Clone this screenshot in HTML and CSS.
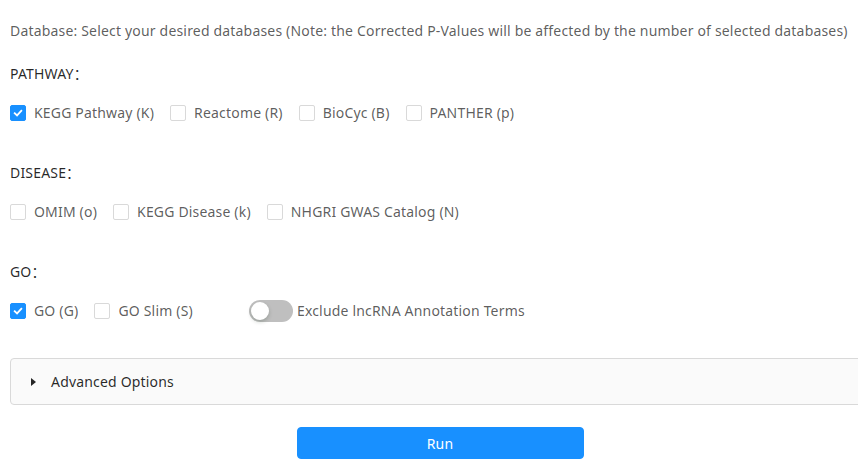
FILE: index.html
```html
<!DOCTYPE html>
<html>
<head>
<meta charset="utf-8">
<link rel="stylesheet" href="styles.css">
</head>
<body>
<div class="page">
  <p class="intro">Database: Select your desired databases (Note: the Corrected P-Values will be affected by the number of selected databases)</p>

  <div class="group">
    <div class="group-label">PATHWAY：</div>
    <div class="row">
      <label class="cb checked"><span class="box"><svg viewBox="0 0 16 16"><path d="M4.2 8.2 L6.9 10.8 L11.8 5.4" /></svg></span><span class="txt">KEGG Pathway (K)</span></label>
      <label class="cb"><span class="box"></span><span class="txt">Reactome (R)</span></label>
      <label class="cb"><span class="box"></span><span class="txt">BioCyc (B)</span></label>
      <label class="cb"><span class="box"></span><span class="txt">PANTHER (p)</span></label>
    </div>
  </div>

  <div class="group">
    <div class="group-label">DISEASE：</div>
    <div class="row">
      <label class="cb"><span class="box"></span><span class="txt">OMIM (o)</span></label>
      <label class="cb"><span class="box"></span><span class="txt">KEGG Disease (k)</span></label>
      <label class="cb"><span class="box"></span><span class="txt">NHGRI GWAS Catalog (N)</span></label>
    </div>
  </div>

  <div class="group">
    <div class="group-label">GO：</div>
    <div class="row">
      <label class="cb checked"><span class="box"><svg viewBox="0 0 16 16"><path d="M4.2 8.2 L6.9 10.8 L11.8 5.4" /></svg></span><span class="txt">GO (G)</span></label>
      <label class="cb"><span class="box"></span><span class="txt">GO Slim (S)</span></label>
      <span class="switch-wrap"><span class="switch"><span class="knob"></span></span><span class="switch-txt">Exclude lncRNA Annotation Terms</span></span>
    </div>
  </div>

  <div class="collapse">
    <div class="collapse-head"><span class="arrow"></span><span>Advanced Options</span></div>
  </div>

  <div class="actions">
    <button class="run">Run</button>
  </div>
</div>
</body>
</html>
```

FILE: styles.css
```css
html, body {
  margin: 0;
  padding: 0;
  background: #fff;
  overflow: hidden;
}
body {
  font-family: "Noto Sans", "Noto Sans CJK SC", sans-serif;
  font-size: 14px;
  line-height: 22px;
  letter-spacing: 0.18px;
  color: rgba(0, 0, 0, 0.65);
}
.page {
  width: 860px;
  padding: 20px 0 0 10px;
}
.intro {
  margin: 0;
  white-space: nowrap;
}
.group {
  margin-top: 21px;
}
.group + .group {
  margin-top: 38px;
}
.group-label {
  color: rgba(0, 0, 0, 0.85);
}
.row {
  display: flex;
  align-items: center;
  height: 22px;
  margin-top: 17px;
}
.cb {
  display: inline-flex;
  align-items: center;
  margin-right: 8px;
}
.box {
  width: 16px;
  height: 16px;
  box-sizing: border-box;
  border: 1px solid #d9d9d9;
  border-radius: 2px;
  background: #fff;
  display: inline-block;
}
.cb.checked .box {
  background: #1890ff;
  border-color: #1890ff;
}
.box svg {
  display: block;
  width: 14px;
  height: 14px;
}
.box svg path {
  fill: none;
  stroke: #fff;
  stroke-width: 2;
  stroke-linecap: square;
}
.txt {
  padding: 0 8px;
}
.switch-wrap {
  display: inline-flex;
  align-items: center;
  margin-left: 40px;
}
.switch {
  position: relative;
  width: 44px;
  height: 22px;
  border-radius: 11px;
  background: #bfbfbf;
  display: inline-block;
}
.knob {
  position: absolute;
  left: 2px;
  top: 2px;
  width: 18px;
  height: 18px;
  border-radius: 50%;
  background: #fff;
  box-shadow: 0 2px 4px rgba(0, 35, 11, 0.2);
}
.switch-txt {
  margin-left: 4px;
}
.collapse {
  margin-top: 36px;
  border: 1px solid #d9d9d9;
  border-radius: 4px;
  background: #fafafa;
}
.collapse-head {
  display: flex;
  align-items: center;
  height: 45px;
  padding-left: 20px;
  color: rgba(0, 0, 0, 0.85);
}
.arrow {
  width: 0;
  height: 0;
  border-top: 4px solid transparent;
  border-bottom: 4px solid transparent;
  border-left: 5px solid rgba(0, 0, 0, 0.85);
  margin-right: 15px;
}
.actions {
  display: flex;
  justify-content: center;
  margin-top: 22px;
}
.run {
  width: 287px;
  height: 32px;
  border: 1px solid #1890ff;
  border-radius: 4px;
  background: #1890ff;
  color: #fff;
  font-family: inherit;
  font-size: 14px;
  letter-spacing: 0.18px;
  padding: 0;
}
```
